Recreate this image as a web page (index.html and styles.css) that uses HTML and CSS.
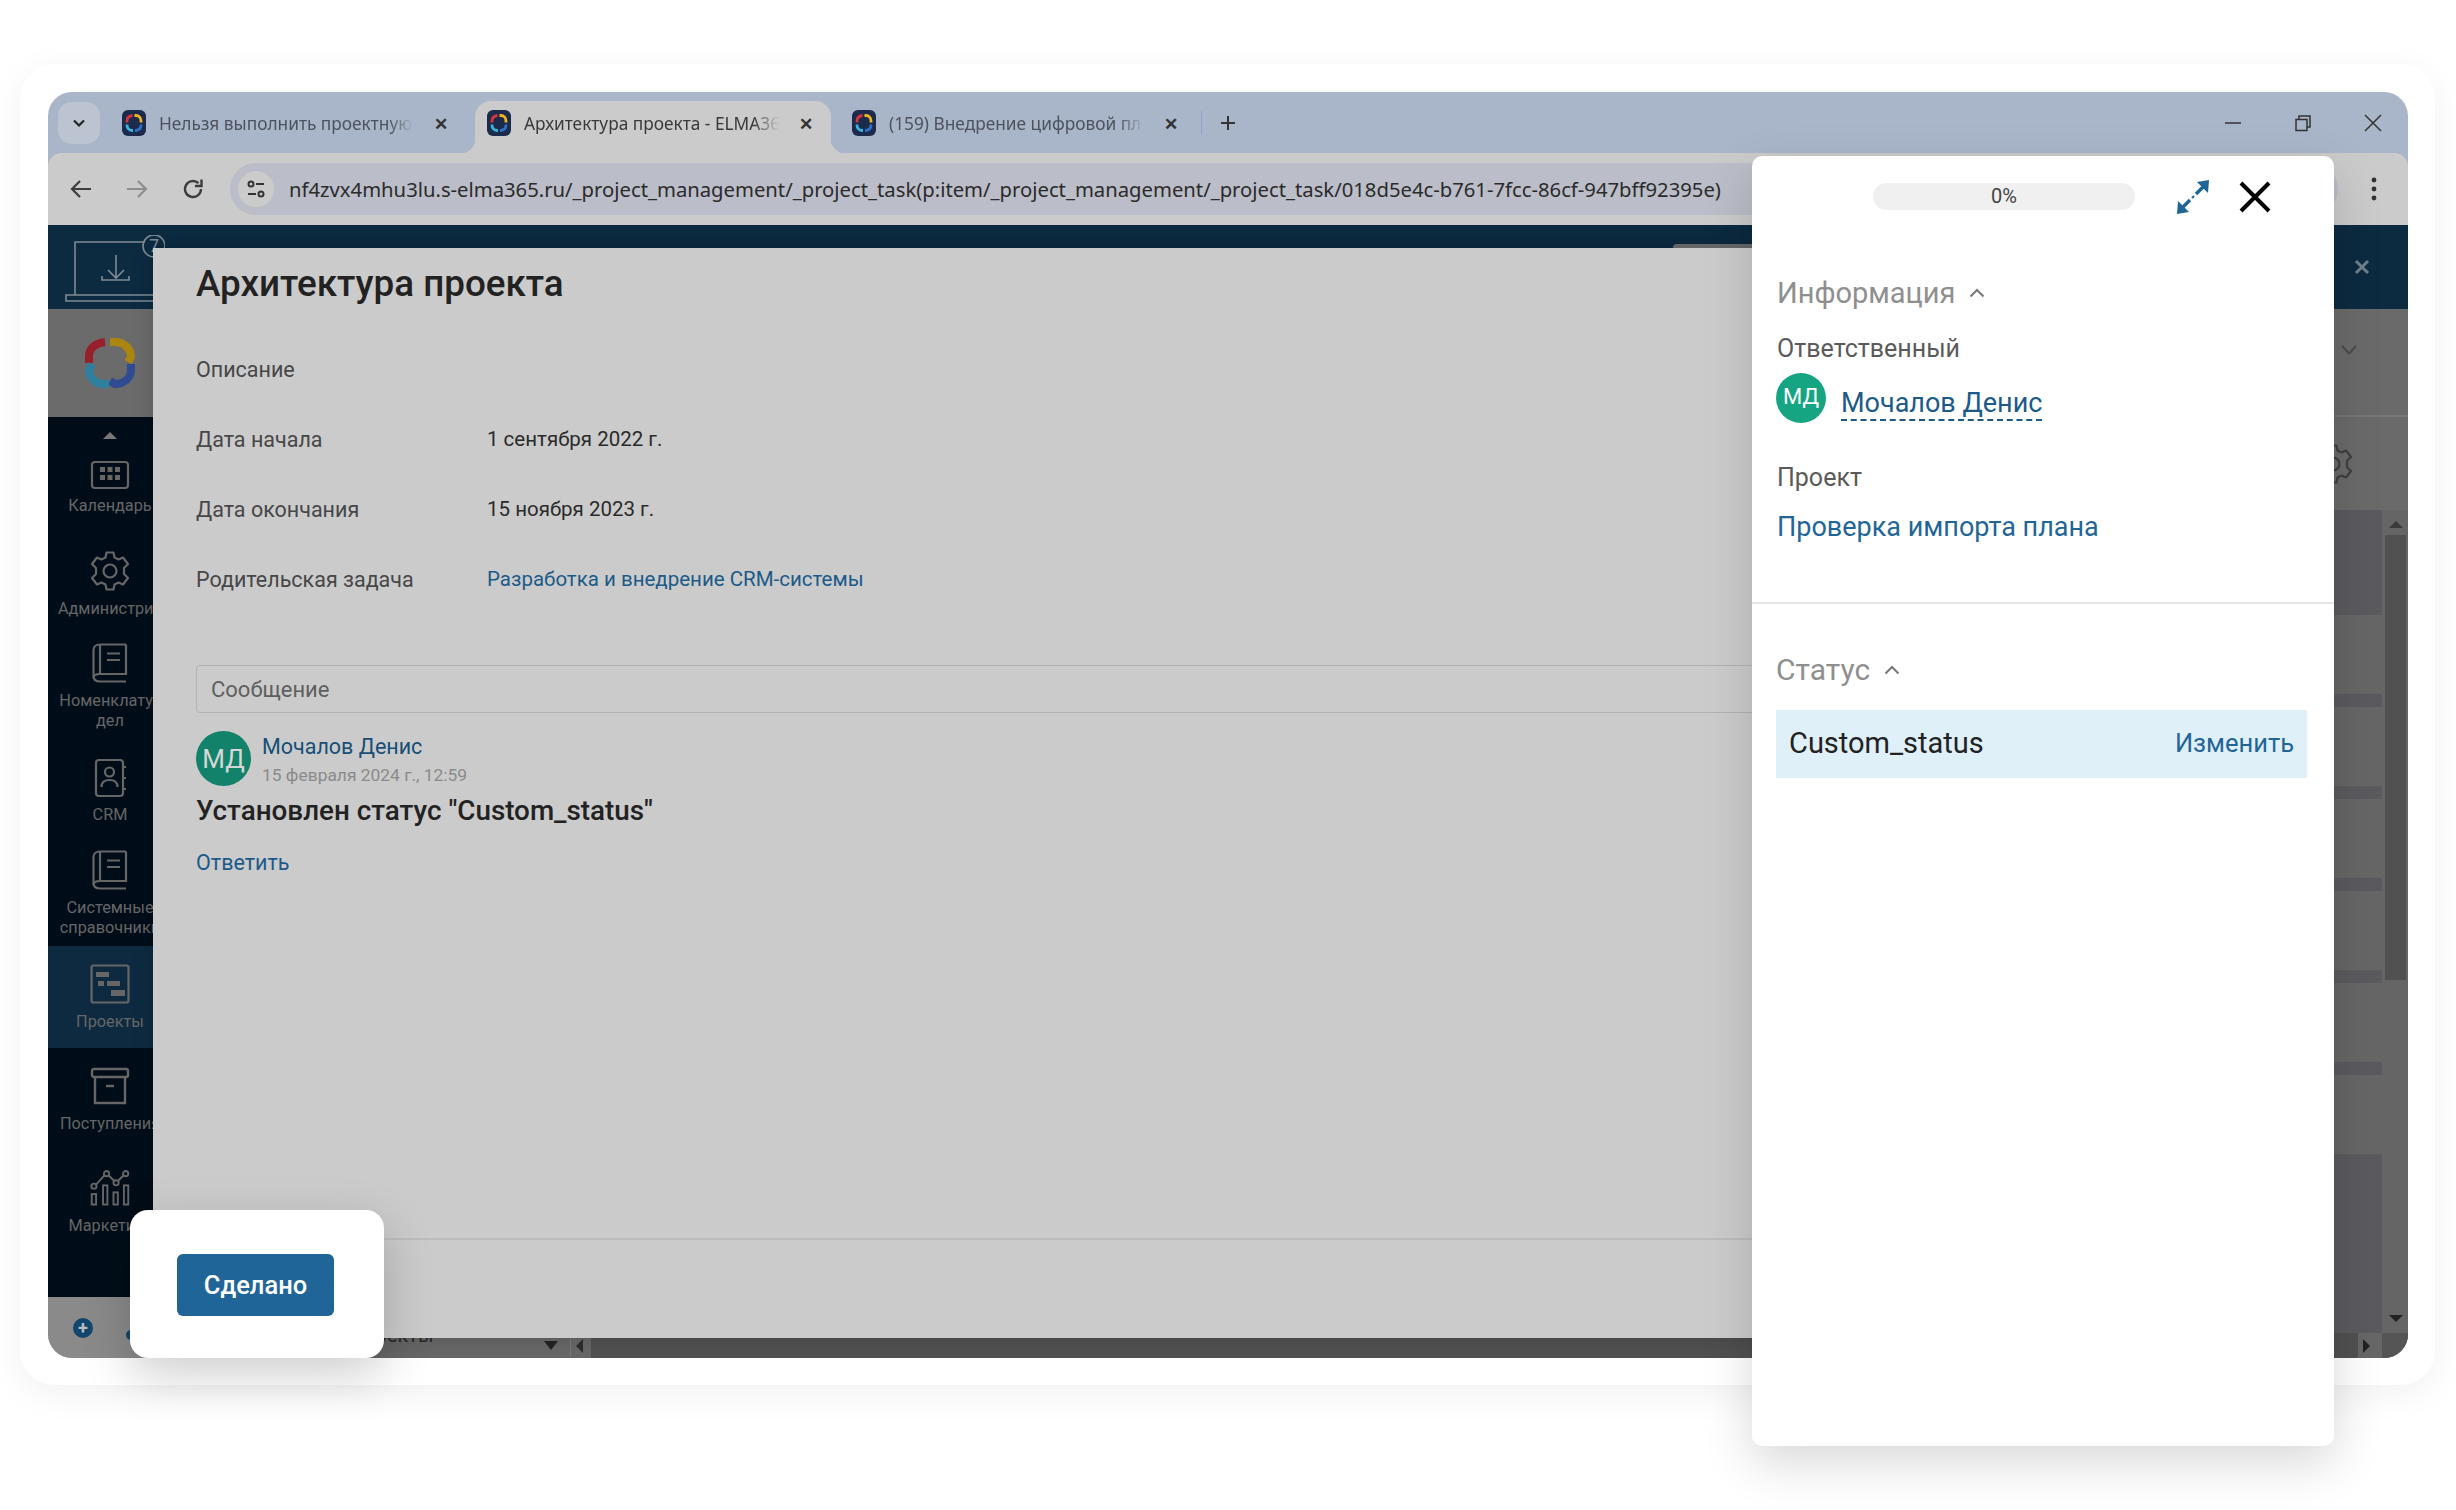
FILE: index.html
```html
<!DOCTYPE html>
<html lang="ru">
<head>
<meta charset="utf-8">
<title>Архитектура проекта</title>
<link rel="stylesheet" href="styles.css">
</head>
<body>
<svg class="sprite" aria-hidden="true">
  <symbol id="ring" viewBox="0 0 50 50">
    <g fill="none" stroke-width="8">
      <path class="r-red" d="M4 25V18C4 10 11 5 20 4"/>
      <path class="r-yel" d="M25 4H30C39 4 46 11 46 19L43 24"/>
      <path class="r-blu" d="M46 26V32C46 40 39 46 30 46L25 43"/>
      <path class="r-tea" d="M24 46H18C10 46 4 39 4 32L7 26"/>
    </g>
  </symbol>
  <symbol id="fav" viewBox="0 0 24 26">
    <rect width="24" height="26" rx="6" fill="#1c2a4c"/>
    <g fill="none" stroke-width="2.800">
      <path stroke="#d8343c" d="M5 12.500V11C5 8 7 6 10.500 5.500"/>
      <path stroke="#f0b51e" d="M12.500 5.500H14C17 5.500 19 8 19 11V12.500"/>
      <path stroke="#2f6fc4" d="M19 14.500V15C19 18 17 20 14 20.500H13"/>
      <path stroke="#38b3dc" d="M11 20.500H10C7 20.500 5 18 5 15V14.500"/>
    </g>
  </symbol>
  <symbol id="book" viewBox="0 0 36 40">
    <g fill="none" stroke="currentColor" stroke-width="2.200">
      <path d="M34 1.500H8C4 1.500 1.500 4 1.500 7V33C1.500 36.500 4 38.500 8 38.500H34"/>
      <path d="M34 1.500V31H8C4 31 1.500 32.500 1.500 35"/>
      <path d="M8 1.500V31"/>
      <path d="M15 10.500H28M15 17H28"/>
    </g>
  </symbol>
  <symbol id="caret-up-line" viewBox="0 0 16 10">
    <path d="M1.500 8.500L8 2L14.500 8.500" fill="none" stroke="#777" stroke-width="2"/>
  </symbol>
</svg>

<div class="card">
  <div class="browser">
    <div class="tabstrip">
      <div class="tab-menu">
        <svg class="tab-menu-icon" viewBox="0 0 14 10"><path d="M2 2.500L7 7.500L12 2.500" fill="none" stroke="#222" stroke-width="2.200"/></svg>
      </div>
      <div class="tab">
        <svg class="fav"><use href="#fav"/></svg>
        <span class="tab-title">Нельзя выполнить проектную</span>
        <span class="tab-x">✕</span>
      </div>
      <div class="tab tab-active">
        <svg class="fav"><use href="#fav"/></svg>
        <span class="tab-title">Архитектура проекта - ELMA36</span>
        <span class="tab-x">✕</span>
      </div>
      <div class="tab">
        <svg class="fav"><use href="#fav"/></svg>
        <span class="tab-title">(159) Внедрение цифровой пл</span>
        <span class="tab-x">✕</span>
      </div>
      <span class="tab-sep"></span>
      <svg class="tab-plus" viewBox="0 0 18 18"><path d="M9 2V16M2 9H16" stroke="#333" stroke-width="2"/></svg>
      <div class="win-controls">
        <svg class="win-icon" viewBox="0 0 18 18"><path d="M1 9H17" stroke="#333" stroke-width="1.500"/></svg>
        <svg class="win-icon" viewBox="0 0 18 18"><path d="M2 5.500H13V16.500H2ZM5 5.500V2H16V13H13" fill="none" stroke="#333" stroke-width="1.500"/></svg>
        <svg class="win-icon" viewBox="0 0 18 18"><path d="M1 1L17 17M17 1L1 17" stroke="#333" stroke-width="1.500"/></svg>
      </div>
    </div>

    <div class="toolbar">
      <svg class="nav-icon" viewBox="0 0 24 24"><path d="M22 12H3M11 4L3 12L11 20" fill="none" stroke="#3d3d3d" stroke-width="2.200"/></svg>
      <svg class="nav-icon nav-off" viewBox="0 0 24 24"><path d="M2 12H21M13 4L21 12L13 20" fill="none" stroke="#8e8e8e" stroke-width="2.200"/></svg>
      <svg class="nav-icon" viewBox="0 0 24 24"><path d="M20 12A8 8 0 1 1 17.500 6.200" fill="none" stroke="#3d3d3d" stroke-width="2.400"/><path d="M20.500 2.500V9H14" fill="none" stroke="#3d3d3d" stroke-width="2.400"/></svg>
      <div class="address">
        <span class="site-chip">
          <svg class="site-icon" viewBox="0 0 20 20"><g fill="none" stroke="#333" stroke-width="2"><circle cx="5" cy="5" r="2.500"/><path d="M10 5H18"/><circle cx="15" cy="15" r="2.500"/><path d="M2 15H10"/></g></svg>
        </span>
        <span class="url">nf4zvx4mhu3lu.s-elma365.ru/_project_management/_project_task(p:item/_project_management/_project_task/018d5e4c-b761-7fcc-86cf-947bff92395e)</span>
      </div>
      <svg class="dots" viewBox="0 0 6 24"><circle cx="3" cy="3" r="2.400"/><circle cx="3" cy="12" r="2.400"/><circle cx="3" cy="21" r="2.400"/></svg>
    </div>

    <div class="app">
      <header class="app-head">
        <svg class="laptop" viewBox="0 0 100 70">
          <g fill="none" stroke="#7f8a94" stroke-width="1.600">
            <path d="M10 60V7H80"/>
            <path d="M1 60H100V66H1Z"/>
            <circle cx="89" cy="11" r="11"/>
            <path d="M51 20V42M43 35L51 43L59 35M37 41V45H64V41"/>
          </g>
          <text class="laptop-badge" x="89" y="17">7</text>
        </svg>
        <svg class="head-x" viewBox="0 0 16 16"><path d="M2 2L14 14M14 2L2 14" stroke="#6f7f8c" stroke-width="3"/></svg>
      </header>

      <div class="app-body">
        <aside class="sidebar">
          <div class="side-logo"><svg class="logo"><use href="#ring"/></svg></div>
          <nav class="side-nav">
            <div class="side-caret-row"><span class="side-caret"></span></div>
            <div class="side-item side-h96">
              <svg class="side-icon" viewBox="0 0 40 40"><g fill="none" stroke="currentColor" stroke-width="2.200"><rect x="2" y="7" width="36" height="26" rx="3"/></g><g fill="currentColor"><rect x="10" y="12" width="5" height="5"/><rect x="17.500" y="12" width="5" height="5"/><rect x="25" y="12" width="5" height="5"/><rect x="10" y="20" width="5" height="5"/><rect x="17.500" y="20" width="5" height="5"/><rect x="25" y="20" width="5" height="5"/></g></svg>
              <span class="side-label side-tight">Календарь</span>
            </div>
            <div class="side-item side-h92">
              <svg class="side-icon" viewBox="0 0 40 40"><g fill="none" stroke="currentColor" stroke-width="2.200"><circle cx="20" cy="20" r="6.500"/><path d="M16.500 1.500H23.500L24.500 6.500L28.500 8.500L33 6.500L38 13L34 17V23L38 27L33 33.500L28.500 31.500L24.500 33.500L23.500 38.500H16.500L15.500 33.500L11.500 31.500L7 33.500L2 27L6 23V17L2 13L7 6.500L11.500 8.500L15.500 6.500Z" stroke-linejoin="round"/></g></svg>
              <span class="side-label">Администри..</span>
            </div>
            <div class="side-item side-h115">
              <svg class="side-icon"><use href="#book"/></svg>
              <span class="side-label">Номенклату..<br>дел</span>
            </div>
            <div class="side-item side-h92">
              <svg class="side-icon" viewBox="0 0 40 40"><g fill="none" stroke="currentColor" stroke-width="2.200"><rect x="6" y="2" width="27" height="36" rx="3"/><circle cx="19.500" cy="14" r="4.500"/><path d="M11.500 29C11.500 24 14 22 19.500 22S27.500 24 27.500 29"/><path d="M33 9H36M33 20H36M33 31H36"/></g></svg>
              <span class="side-label side-loose">CRM</span>
            </div>
            <div class="side-item side-h114">
              <svg class="side-icon"><use href="#book"/></svg>
              <span class="side-label">Системные<br>справочники</span>
            </div>
            <div class="side-item side-h102 side-active">
              <svg class="side-icon" viewBox="0 0 40 40"><g fill="none" stroke="currentColor" stroke-width="2.200"><rect x="1.500" y="1.500" width="37" height="37" rx="2"/></g><g fill="currentColor"><rect x="6" y="8" width="13" height="5"/><rect x="8" y="17" width="6" height="5"/><rect x="17" y="17" width="13" height="5"/><rect x="21" y="26" width="14" height="6"/></g></svg>
              <span class="side-label">Проекты</span>
            </div>
            <div class="side-item side-h102">
              <svg class="side-icon" viewBox="0 0 40 40"><g fill="none" stroke="currentColor" stroke-width="2.400"><rect x="2" y="3" width="36" height="8" rx="2"/><path d="M5 11V37H35V11"/><path d="M16 20H24"/></g></svg>
              <span class="side-label">Поступления</span>
            </div>
            <div class="side-item side-h102">
              <svg class="side-icon" viewBox="0 0 46 40"><g fill="none" stroke="currentColor" stroke-width="2.200"><rect x="2" y="27" width="5" height="12"/><rect x="15" y="17" width="5" height="22"/><rect x="27" y="25" width="5" height="14"/><rect x="39" y="17" width="5" height="22"/><path d="M7 16L17 5M21 5L28 12M32 12L39 5"/><circle cx="4.500" cy="18" r="3"/><circle cx="19" cy="3.500" r="3"/><circle cx="30" cy="14" r="3"/><circle cx="41" cy="3.500" r="3"/></g></svg>
              <span class="side-label">Маркетинг</span>
            </div>
          </nav>
          <div class="side-foot">
            <span class="plus-dot">+</span>
            <span class="side-foot-mark"></span>
          </div>
        </aside>

        <main class="work">
          <div class="work-top">
            <svg class="work-chevron" viewBox="0 0 18 12"><path d="M2 2L9 9.500L16 2" fill="none" stroke="#4c4c4c" stroke-width="2"/></svg>
          </div>
          <div class="work-tools">
            <svg class="work-gear" viewBox="0 0 40 40"><g fill="none" stroke="#3f3f3f" stroke-width="2.200"><circle cx="20" cy="20" r="6.500"/><path d="M16.500 1.500H23.500L24.500 6.500L28.500 8.500L33 6.500L38 13L34 17V23L38 27L33 33.500L28.500 31.500L24.500 33.500L23.500 38.500H16.500L15.500 33.500L11.500 31.500L7 33.500L2 27L6 23V17L2 13L7 6.500L11.500 8.500L15.500 6.500Z" stroke-linejoin="round"/></g></svg>
          </div>
          <div class="work-table">
            <div class="rows">
              <div class="row-band"></div>
              <div class="row-line"></div>
              <div class="row-gap"></div>
              <div class="row-line"></div>
              <div class="row-gap"></div>
              <div class="row-line"></div>
              <div class="row-gap"></div>
              <div class="row-line"></div>
              <div class="row-gap"></div>
              <div class="row-line"></div>
              <div class="row-gap"></div>
              <div class="row-line"></div>
            </div>
            <div class="vscroll">
              <span class="arrow-up"></span>
              <span class="thumb"></span>
              <span class="arrow-down"></span>
            </div>
          </div>
          <div class="work-foot">
            <div class="sheet-tab"><span class="sheet-name">Проекты</span><span class="sheet-caret"></span></div>
            <div class="hs-left"><span class="arrow-left"></span></div>
            <div class="hs-track"></div>
            <div class="hs-right"><span class="arrow-right"></span></div>
            <div class="hs-corner"></div>
          </div>
        </main>
      </div>

      <section class="modal">
        <h1 class="modal-title">Архитектура проекта</h1>
        <div class="fields">
          <div class="field-label">Описание</div><div class="field-value"></div>
          <div class="field-label">Дата начала</div><div class="field-value">1 сентября 2022 г.</div>
          <div class="field-label">Дата окончания</div><div class="field-value">15 ноября 2023 г.</div>
          <div class="field-label">Родительская задача</div><div class="field-value field-link">Разработка и внедрение CRM-системы</div>
        </div>
        <div class="msg-input">Сообщение</div>
        <div class="comment">
          <span class="avatar avatar-dim">МД</span>
          <div class="comment-meta">
            <span class="comment-name">Мочалов Денис</span>
            <span class="comment-date">15 февраля 2024 г., 12:59</span>
          </div>
        </div>
        <p class="comment-text">Установлен статус "Custom_status"</p>
        <span class="comment-reply">Ответить</span>
        <div class="modal-foot"></div>
      </section>
    </div>
  </div>
</div>

<aside class="panel">
  <div class="panel-top">
    <div class="progress">0%</div>
    <svg class="expand" viewBox="0 0 34 34"><g fill="#1f6598"><path d="M33 0L32 13L21 2Z"/><path d="M1 34L2 21L13 32Z"/></g><path d="M27 7L20 14M14 20L7 27" stroke="#1f6598" stroke-width="3.400" fill="none"/><path d="M18 16L16 18" stroke="#1f6598" stroke-width="2" fill="none"/></svg>
    <svg class="panel-x" viewBox="0 0 32 32"><path d="M2 2L30 30M30 2L2 30" stroke="#000" stroke-width="4"/></svg>
  </div>
  <div class="panel-section panel-info">
    <div class="section-head">Информация <svg class="chev"><use href="#caret-up-line"/></svg></div>
    <div class="prop-label prop-first">Ответственный</div>
    <div class="person">
      <span class="avatar avatar-small">МД</span>
      <span class="person-name">Мочалов Денис</span>
    </div>
    <div class="prop-label prop-second">Проект</div>
    <div class="project-link">Проверка импорта плана</div>
  </div>
  <div class="panel-section panel-status">
    <div class="section-head">Статус <svg class="chev"><use href="#caret-up-line"/></svg></div>
    <div class="status-bar">
      <span class="status-name">Custom_status</span>
      <span class="status-change">Изменить</span>
    </div>
  </div>
</aside>

<div class="done-pop">
  <button class="done-btn" type="button">Сделано</button>
</div>
</body>
</html>
```

FILE: styles.css
```css
* { box-sizing: border-box; }
html, body { margin: 0; padding: 0; }
body {
  position: relative;
  width: 2456px;
  height: 1510px;
  overflow: hidden;
  background: #fff;
  font-family: Roboto, "Liberation Sans", sans-serif;
  color: #222;
}
.sprite { display: none; }

.card {
  width: 2415px;
  height: 1321px;
  margin: 64px 0 0 20px;
  padding: 28px 27px 27px 28px;
  border-radius: 34px;
  background: #fff;
  box-shadow: 0 8px 36px rgba(0, 0, 0, .06);
}
.browser {
  display: flex;
  flex-direction: column;
  height: 1266px;
  width: 2360px;
  border-radius: 24px;
  overflow: hidden;
  background: #a9b6ca;
}

/* tabs */
.tabstrip {
  display: flex;
  align-items: center;
  flex: 0 0 61px;
  padding: 0 0 0 10px;
}
.tab-menu {
  display: flex;
  align-items: center;
  justify-content: center;
  width: 42px;
  height: 42px;
  margin-right: 10px;
  border-radius: 14px;
  background: #bcc4d2;
}
.tab-menu-icon { width: 14px; height: 10px; }
.tab {
  position: relative;
  display: flex;
  align-items: center;
  align-self: flex-end;
  width: 356px;
  height: 52px;
  margin-right: 9px;
  padding: 0 0 8px 12px;
  border-radius: 16px 16px 0 0;
  font-family: "Noto Sans", sans-serif;
  font-size: 17.300px;
  color: #4d525c;
}
.tab-active { background: #cbcbcb; color: #3a3a3a; }
.tab-active::before,
.tab-active::after {
  content: "";
  position: absolute;
  bottom: 0;
  width: 14px;
  height: 14px;
}
.tab-active::before {
  left: -14px;
  background: radial-gradient(circle at 0 0, transparent 14px, #cbcbcb 14.500px);
}
.tab-active::after {
  right: -14px;
  background: radial-gradient(circle at 100% 0, transparent 14px, #cbcbcb 14.500px);
}
.fav { width: 24px; height: 26px; flex: none; }
.tab-title {
  width: 255px;
  margin-left: 13px;
  white-space: nowrap;
  overflow: hidden;
  -webkit-mask-image: linear-gradient(90deg, #000 90%, transparent 100%);
  mask-image: linear-gradient(90deg, #000 90%, transparent 100%);
}
.tab-x { margin-left: 20px; font-size: 17px; font-weight: 700; color: #333; }
.tab-sep {
  width: 1px;
  height: 24px;
  margin: 0 0 0 -4px;
  background: #8ea3c4;
}
.tab-plus { width: 18px; height: 18px; margin: 0 0 0 17px; }
.win-controls {
  display: flex;
  gap: 52px;
  margin: 0 26px 0 auto;
}
.win-icon { width: 18px; height: 18px; }

/* toolbar */
.toolbar {
  display: flex;
  align-items: center;
  flex: 0 0 72px;
  padding: 0 31px 0 21px;
  background: #cbcbcb;
  border-radius: 14px 14px 0 0;
}
.nav-icon { width: 24px; height: 24px; flex: none; margin-right: 32px; }
.address {
  display: flex;
  align-items: center;
  flex: 1;
  min-width: 0;
  height: 52px;
  margin-left: -7px;
  border-radius: 26px;
  background: #bbbdc8;
}
.site-chip {
  display: flex;
  align-items: center;
  justify-content: center;
  flex: none;
  width: 36px;
  height: 36px;
  margin-left: 8px;
  border-radius: 50%;
  background: #cbcbcb;
}
.site-icon { width: 20px; height: 20px; }
.url {
  margin-left: 15px;
  font-family: "Noto Sans", sans-serif;
  font-size: 20.250px;
  color: #2b2b2b;
  white-space: nowrap;
}
.dots { flex: none; width: 6px; height: 24px; margin-left: 33px; fill: #333; }

/* app */
.app { position: relative; display: flex; flex-direction: column; flex: 1; min-height: 0; }
.app-head {
  display: flex;
  align-items: center;
  justify-content: space-between;
  flex: 0 0 84px;
  padding: 0 38px 0 17px;
  background: #0c2a40;
}
.laptop { align-self: flex-start; width: 100px; height: 70px; margin-top: 10px; }
.laptop-badge {
  font-family: Roboto, sans-serif;
  font-size: 18px;
  fill: #7f8a94;
  text-anchor: middle;
}
.head-x { width: 16px; height: 16px; }
.app-body { display: flex; flex: 1; min-height: 0; }

.sidebar { display: flex; flex-direction: column; flex: 0 0 124px; }
.side-logo {
  display: flex;
  align-items: center;
  justify-content: center;
  flex: 0 0 108px;
  background: #6b6b6b;
}
.logo { width: 50px; height: 50px; margin-top: -1px; }
.r-red { stroke: #98202a; }
.r-yel { stroke: #ab860f; }
.r-blu { stroke: #2f4c92; }
.r-tea { stroke: #2f7f9f; }
.side-nav {
  flex: 1;
  min-height: 0;
  overflow: hidden;
  background: #000d18;
  color: #666;
}
.side-caret-row { height: 20px; display: flex; justify-content: center; }
.side-caret {
  width: 0;
  height: 0;
  margin-top: 15px;
  border: 7px solid transparent;
  border-top: 0;
  border-bottom-color: #777;
}
.side-item {
  display: flex;
  flex-direction: column;
  align-items: center;
  padding-top: 18px;
  overflow: hidden;
}
.side-h92 { height: 92px; }
.side-h96 { height: 96px; }
.side-h102 { height: 102px; }
.side-h114 { height: 114px; }
.side-h115 { height: 115px; }
.side-active { background: #0d2a40; }
.side-icon { flex: none; width: 40px; height: 40px; }
.side-label {
  margin-top: 8px;
  font-size: 16.300px;
  line-height: 20px;
  text-align: center;
  white-space: nowrap;
}
.side-tight { margin-top: 1px; }
.side-loose { margin-top: 7px; }
.side-foot {
  display: flex;
  align-items: center;
  flex: 0 0 61px;
  padding-left: 25px;
  background: #8a8a8a;
}
.plus-dot {
  display: flex;
  align-items: center;
  justify-content: center;
  width: 20px;
  height: 20px;
  border-radius: 50%;
  background: #12466c;
  color: #bbb;
  font-size: 18px;
  font-weight: 700;
  line-height: 1;
}
.side-foot-mark {
  width: 10px;
  height: 10px;
  margin: 14px 0 0 33px;
  border-radius: 50%;
  background: #12466c;
}

.work { display: flex; flex-direction: column; flex: 1; min-width: 0; background: #6a6a6a; }
.work-top {
  display: flex;
  align-items: center;
  justify-content: flex-end;
  flex: 0 0 108px;
  padding: 0 50px 25px 0;
  border-bottom: 2px solid #757575;
}
.work-chevron { width: 18px; height: 12px; }
.work-tools {
  display: flex;
  align-items: center;
  justify-content: flex-end;
  flex: 0 0 93px;
  padding: 0 55px 0 0;
}
.work-gear { width: 40px; height: 40px; }
.work-table { display: flex; flex: 1; min-height: 0; }
.rows { display: flex; flex-direction: column; flex: 1; background: #5b5b5f; }
.row-band { height: 105px; }
.row-line { height: 79px; background: #666; }
.row-gap { height: 13px; }
.vscroll {
  display: flex;
  flex-direction: column;
  align-items: center;
  flex: 0 0 26px;
  padding-left: 1px;
  background: #656565;
}
.arrow-up, .arrow-down { width: 0; height: 0; border: 7px solid transparent; }
.arrow-up { margin-top: 11px; border-top: 0; border-bottom-color: #3a3a3a; }
.arrow-down { margin-top: auto; margin-bottom: 11px; border-bottom: 0; border-top-color: #222; }
.thumb { width: 21px; height: 445px; margin-top: 7px; background: #515151; }
.work-foot { display: flex; flex: 0 0 25px; background: #676767; }
.sheet-tab {
  display: flex;
  align-items: center;
  flex: 0 0 398px;
  padding: 0 12px 0 178px;
}
.sheet-name { margin-top: -20px; font-size: 20px; line-height: 25px; color: #2a2a2a; }
.sheet-caret {
  width: 0;
  height: 0;
  margin: 0 0 0 auto;
  border: 7px solid transparent;
  border-bottom: 0;
  border-top-width: 9px;
  border-top-color: #222;
}
.hs-left {
  display: flex;
  align-items: center;
  flex: 0 0 21px;
  padding-left: 5px;
  border-left: 1px solid #777;
}
.arrow-left, .arrow-right { width: 0; height: 0; border: 7px solid transparent; }
.arrow-left { border-left: 0; border-right-color: #2c2c2c; }
.arrow-right { border-right: 0; border-left-color: #222; }
.hs-track { flex: 1; background: #505050; }
.hs-right { display: flex; align-items: center; flex: 0 0 24px; padding-left: 5px; }
.hs-corner { flex: 0 0 26px; background: #555; }

/* modal */
.modal {
  position: absolute;
  left: 105px;
  top: 23px;
  width: 1650px;
  height: 1090px;
  display: flex;
  flex-direction: column;
  align-items: flex-start;
  padding-left: 43px;
  background: #cbcbcb;
  box-shadow: 0 0 20px rgba(0, 0, 0, .15);
}
.modal::before {
  content: "";
  position: absolute;
  top: -4px;
  right: 0;
  width: 130px;
  height: 4px;
  background: #666;
  border-radius: 4px 0 0 0;
}
.modal-title {
  margin: 14px 0 28px;
  font-size: 36.800px;
  font-weight: 500;
  line-height: 44px;
  color: #222;
}
.fields {
  display: grid;
  grid-template-columns: 291px 1fr;
  grid-auto-rows: 70px;
  align-items: center;
  font-size: 20.500px;
}
.field-label { font-size: 21.500px; color: #474747; }
.field-value { color: #2a2a2a; }
.field-link { color: #1b5a89; }
.msg-input {
  display: flex;
  align-items: center;
  width: 1700px;
  height: 48px;
  margin-top: 51px;
  padding-left: 14px;
  border: 1px solid #b3b3b3;
  border-radius: 4px;
  font-size: 22px;
  color: #5f5f5f;
  flex: none;
}
.comment { display: flex; gap: 11px; margin-top: 18px; }
.avatar {
  display: flex;
  align-items: center;
  justify-content: center;
  flex: none;
  border-radius: 50%;
  color: #fff;
}
.avatar-dim {
  width: 55px;
  height: 55px;
  background: #13826a;
  font-size: 26px;
  color: #d6d6d6;
}
.comment-meta { display: flex; flex-direction: column; }
.comment-name { font-size: 21.500px; line-height: 28px; margin-top: 2px; color: #174f78; }
.comment-date { font-size: 17.400px; line-height: 24px; margin-top: 2px; color: #8a8a8a; }
.comment-text { margin: 7px 0 0; font-size: 27.800px; font-weight: 500; line-height: 34px; color: #222; }
.comment-reply { margin-top: 22px; font-size: 21.500px; line-height: 26px; color: #1b5a89; }
.modal-foot {
  margin-top: auto;
  flex: 0 0 100px;
  width: 1650px;
  margin-left: -43px;
  border-top: 2px solid #bdbdbd;
}

/* right panel */
.panel {
  position: absolute;
  left: 1752px;
  top: 156px;
  width: 582px;
  height: 1290px;
  border-radius: 10px;
  background: #fff;
  box-shadow: 0 16px 50px rgba(0, 0, 0, .16);
}
.panel-top { display: flex; align-items: flex-start; height: 60px; padding: 24px 0 0 121px; }
.progress {
  width: 262px;
  height: 27px;
  margin-top: 3px;
  border-radius: 14px;
  background: #f0f0f0;
  font-size: 20px;
  line-height: 27px;
  text-align: center;
  color: #444;
}
.expand { width: 34px; height: 34px; margin-left: 41px; }
.panel-x { width: 32px; height: 32px; margin-left: 29px; margin-top: 1px; }
.panel-section { padding-left: 25px; }
.panel-info { padding-top: 60px; padding-bottom: 58px; border-bottom: 2px solid #e6e6e6; }
.panel-status { padding-top: 49px; padding-left: 24px; }
.section-head {
  display: flex;
  align-items: center;
  gap: 14px;
  font-size: 29px;
  line-height: 34px;
  color: #8f8f8f;
}
.panel-status .section-head { font-size: 30px; }
.chev { width: 16px; height: 10px; }
.prop-label { font-size: 25px; line-height: 30px; color: #5a5a5a; }
.prop-first { margin-top: 24px; }
.prop-second { margin-top: 40px; }
.person { display: flex; gap: 15px; margin-top: 9px; margin-left: -1px; }
.avatar-small { width: 50px; height: 50px; background: #16a583; font-size: 22px; padding-bottom: 3px; }
.person-name {
  height: 35px;
  margin-top: 13px;
  border-bottom: 2px dashed #1b5a89;
  font-size: 27px;
  line-height: 34px;
  color: #1b5a89;
}
.project-link { margin-top: 17px; font-size: 27px; line-height: 34px; color: #1f6598; }
.status-bar {
  display: flex;
  align-items: center;
  justify-content: space-between;
  width: 531px;
  height: 68px;
  margin-top: 23px;
  padding: 0 13px 2px 13px;
  background: #dff0f9;
}
.status-name { font-size: 29px; color: #222; }
.status-change { font-size: 25.500px; color: #1f6598; }

/* done popup */
.done-pop {
  position: absolute;
  left: 130px;
  top: 1210px;
  display: flex;
  align-items: flex-start;
  justify-content: flex-start;
  width: 254px;
  height: 148px;
  padding: 44px 0 0 47px;
  border-radius: 18px;
  background: #fff;
  box-shadow: 0 16px 50px rgba(0, 0, 0, .2);
}
.done-btn {
  width: 157px;
  height: 62px;
  border: 0;
  border-radius: 6px;
  background: #1f6598;
  color: #fff;
  font-family: Roboto, sans-serif;
  font-size: 25.500px;
  font-weight: 500;
}
```
